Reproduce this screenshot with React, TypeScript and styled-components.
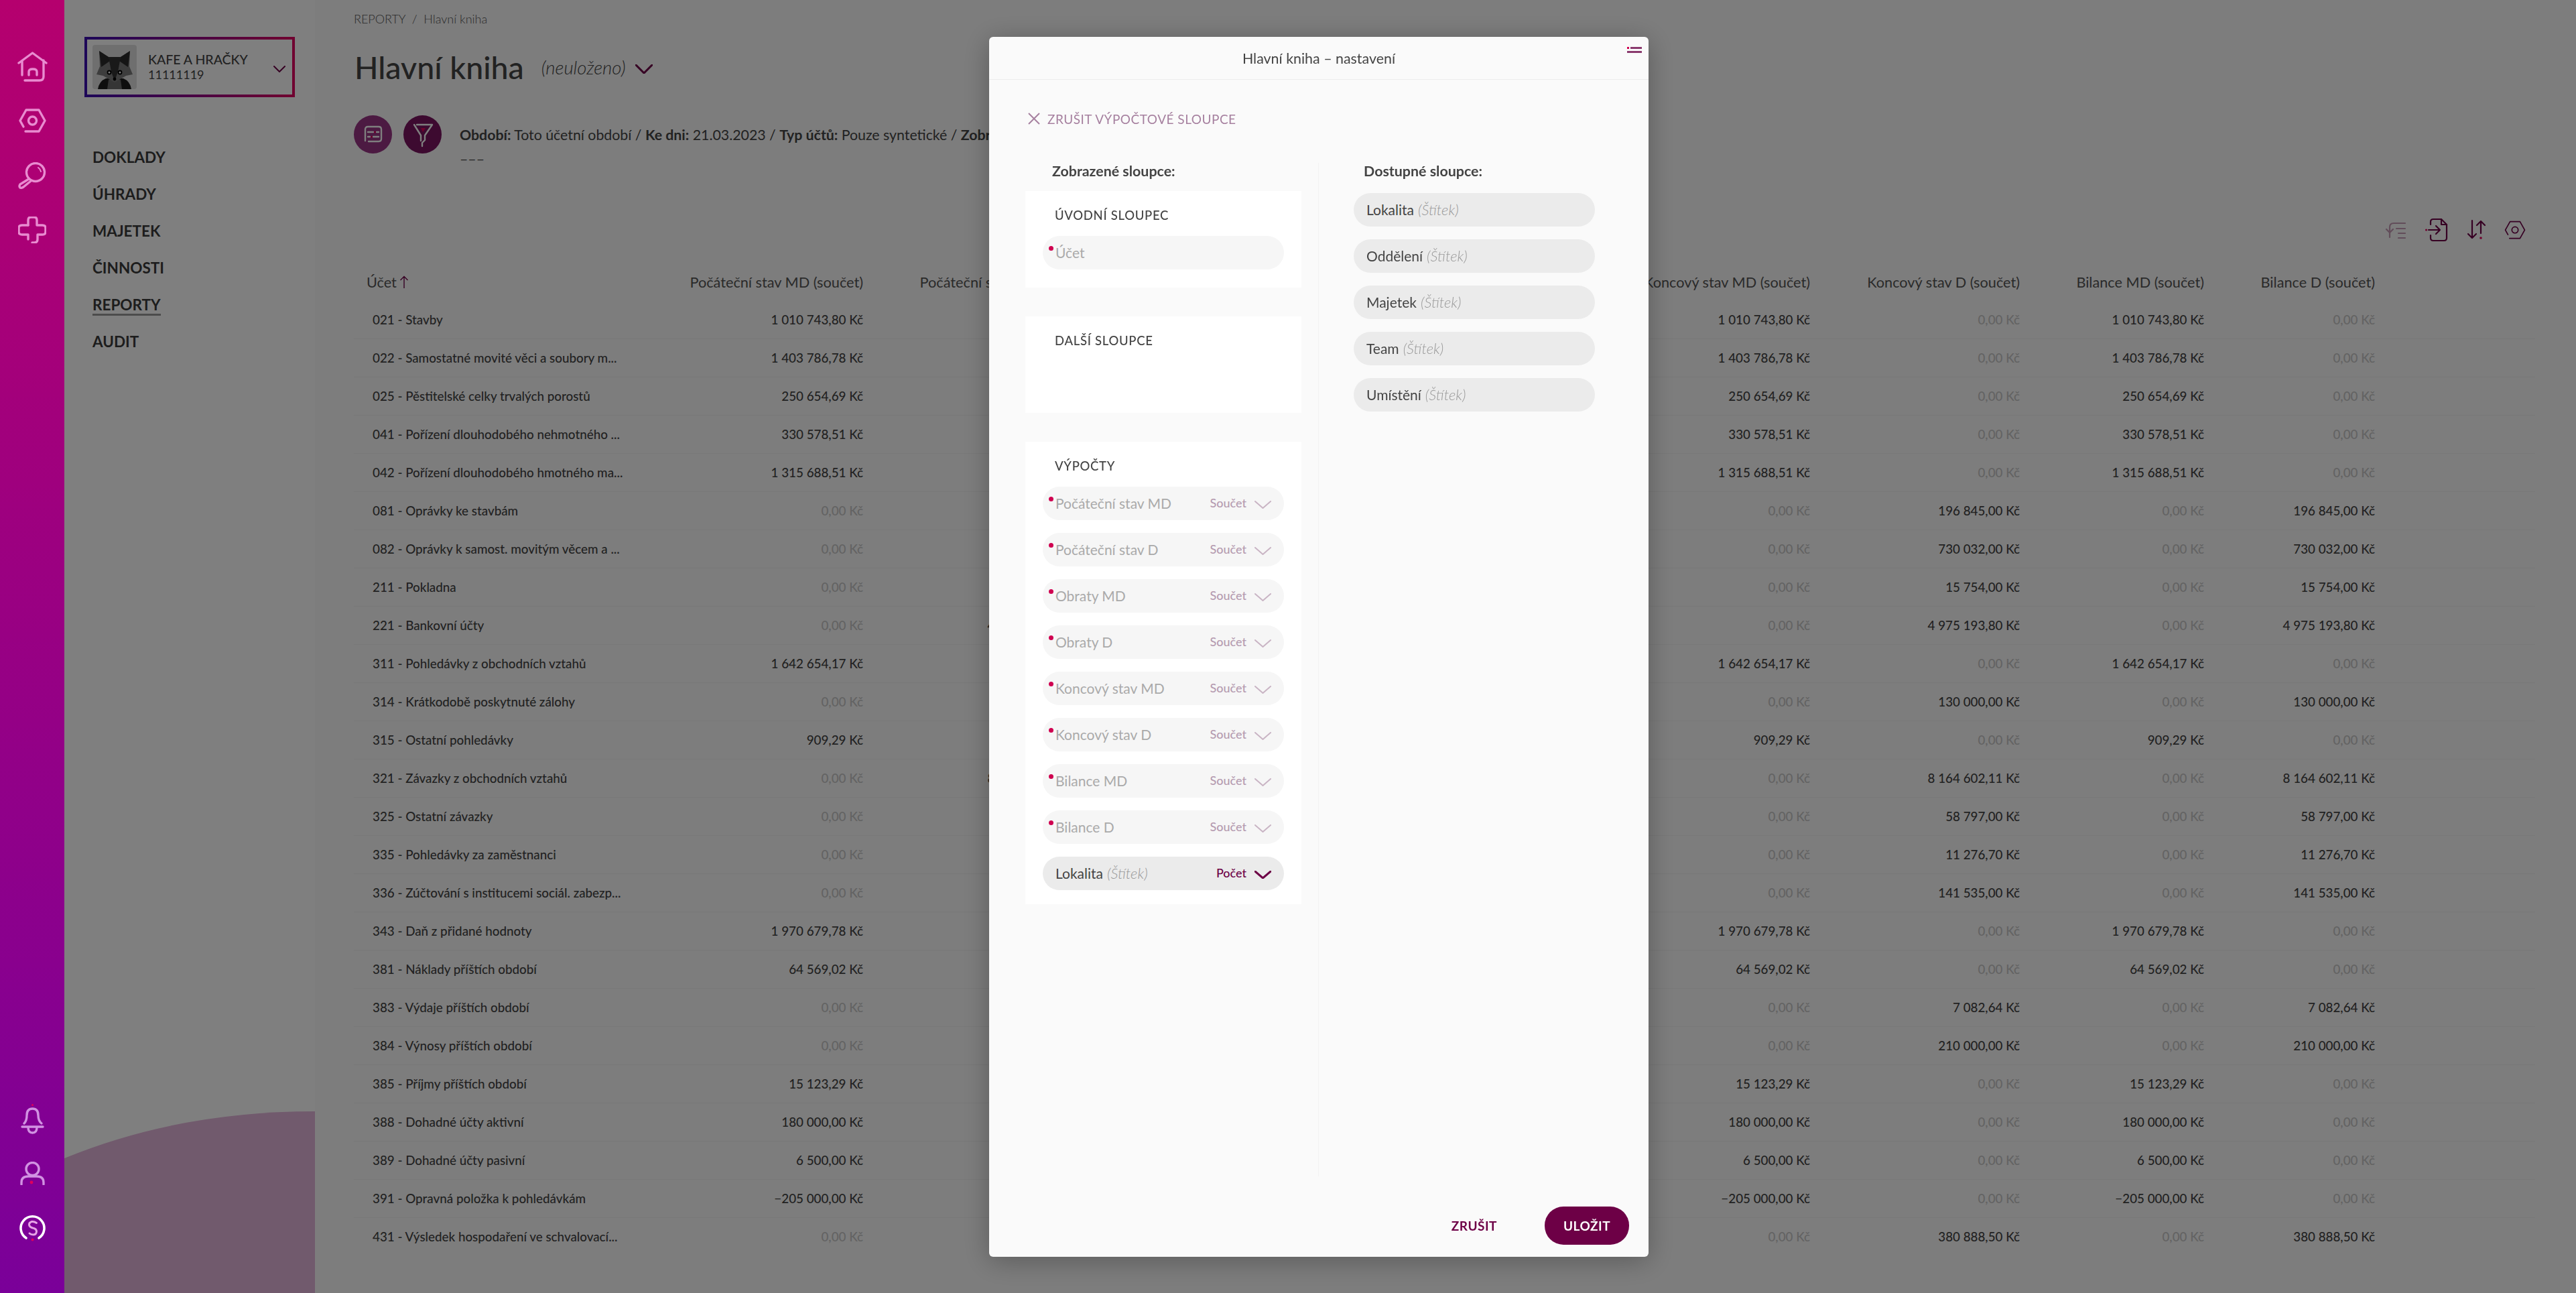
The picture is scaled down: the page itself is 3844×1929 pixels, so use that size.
import React from 'react';
import styled, { createGlobalStyle } from 'styled-components';

const GlobalStyle = createGlobalStyle`
  html, body {
    margin: 0;
    padding: 0;
    background: #fafafa;
    font-family: Lato, "Noto Sans", sans-serif;
    color: #444;
  }
  * {
    box-sizing: border-box;
  }
`;

const TABLE_COLUMNS = '420px 340px 323px 372px 360px 358px 313px 275px 255px 1fr';

const Page = styled.div`
  display: flex;
  width: 3844px;
  height: 1929px;
  overflow: hidden;
`;

const Rail = styled.aside`
  position: relative;
  z-index: 3;
  flex: 0 0 96px;
  display: flex;
  flex-direction: column;
  justify-content: space-between;
  padding: 59px 0 57px;
  background: linear-gradient(180deg, #b5006e 0%, #7a0099 100%);
`;

const RailGroup = styled.div`
  display: flex;
  flex-direction: column;
`;

const RailSlot = styled.div<{ $tone?: string }>`
  height: 81px;
  display: flex;
  align-items: center;
  justify-content: center;
  color: ${p => p.$tone || '#e88cd0'};
  & svg {
    fill: none;
    stroke: currentColor;
    stroke-width: 3.4;
    stroke-linecap: round;
    stroke-linejoin: round;
  }
`;

const Sidebar = styled.nav`
  position: relative;
  flex: 0 0 374px;
  padding: 55px 30px 0;
  background: #fff;
`;

const Blob = styled.svg`
  position: absolute;
  left: 0;
  bottom: 0;
`;

const CompanyBox = styled.div`
  display: flex;
  align-items: center;
  height: 90px;
  width: 314px;
  padding: 0 10px 0 8px;
  border: 4px solid;
  border-image: linear-gradient(90deg, #3c0fb0, #e00060) 1;
`;

const Avatar = styled.svg`
  flex: 0 0 66px;
  border-radius: 4px;
  background: #dedede;
`;

const CompanyText = styled.div`
  flex: 1;
  margin-left: 17px;
  line-height: 23px;
`;

const CompanyName = styled.div`
  font-size: 19.5px;
  font-weight: 500;
`;

const CompanyNumber = styled.div`
  font-size: 18px;
`;

const NavList = styled.ul`
  margin: 64px 0 0;
  padding: 0 0 0 12px;
  list-style: none;
`;

const NavItem = styled.li<{ $active?: boolean }>`
  height: 55px;
  display: flex;
  align-items: center;
  font-size: 22.5px;
  font-weight: 700;
  color: #3a3a3a;
  & span {
    display: inline-block;
    line-height: 26px;
    border-bottom: 3px solid ${p => (p.$active ? '#999' : 'transparent')};
  }
`;

const Main = styled.main`
  flex: 1;
  min-width: 0;
  padding: 17px 61px 0 58px;
`;

const Breadcrumb = styled.div`
  height: 22px;
  line-height: 22px;
  font-size: 18px;
  font-weight: 300;
  color: #555;
`;

const TitleRow = styled.div`
  display: flex;
  align-items: center;
  height: 60px;
  margin-top: 31px;
`;

const Title = styled.h1`
  margin: 0 0 0 1px;
  font-size: 46.5px;
  font-weight: 500;
  color: #444;
`;

const TitleNote = styled.span`
  margin-left: 26px;
  font-size: 27.5px;
  font-weight: 300;
  font-style: italic;
  color: #444;
`;

const TitleChevron = styled.span`
  display: flex;
  margin-left: 3px;
`;

const FilterRow = styled.div`
  display: flex;
  margin-top: 42px;
  height: 83px;
`;

const RoundButton = styled.div<{ $bg: string }>`
  flex: 0 0 57px;
  width: 57px;
  height: 57px;
  margin-right: 17px;
  border-radius: 50%;
  background: ${p => p.$bg};
  display: flex;
  align-items: center;
  justify-content: center;
`;

const FilterText = styled.div`
  margin: 11px 0 0 10px;
  font-size: 21.3px;
  line-height: 36px;
  white-space: nowrap;
  & b {
    font-weight: 700;
  }
`;

const Toolbar = styled.div`
  display: flex;
  justify-content: flex-end;
  align-items: center;
  gap: 28px;
  height: 32px;
  margin-top: 72px;
  padding-right: 14px;
  color: #6d0046;
  & svg {
    fill: none;
    stroke: currentColor;
    stroke-width: 2.2;
    stroke-linecap: round;
    stroke-linejoin: round;
  }
`;

const TableHead = styled.div`
  display: grid;
  grid-template-columns: ${TABLE_COLUMNS};
  align-items: center;
  height: 56px;
  margin-top: 34px;
  padding-bottom: 1px;
  font-size: 21.7px;
  color: #555;
  white-space: nowrap;
`;

const HeadAccount = styled.div`
  padding-left: 19px;
  display: flex;
  align-items: center;
  gap: 4px;
`;

const HeadCell = styled.div`
  display: flex;
  justify-content: flex-end;
  white-space: nowrap;
`;

const Row = styled.div<{ $last?: boolean }>`
  display: grid;
  grid-template-columns: ${TABLE_COLUMNS};
  align-items: center;
  height: 57px;
  padding-bottom: 2px;
  font-size: 18.8px;
  font-weight: 500;
  white-space: nowrap;
  border-bottom: 1px solid ${p => (p.$last ? 'transparent' : '#f0f0f0')};
`;

const AccountCell = styled.div`
  padding-left: 28px;
  color: #444;
`;

const AmountCell = styled.div<{ $zero: boolean }>`
  text-align: right;
  color: ${p => (p.$zero ? '#c6c6c6' : '#444')};
`;

const Overlay = styled.div`
  position: fixed;
  z-index: 2;
  top: 0;
  left: 96px;
  right: 0;
  bottom: 0;
  background: rgba(0, 0, 0, 0.5);
`;

const Modal = styled.section`
  position: fixed;
  z-index: 4;
  top: 55px;
  left: 1476px;
  width: 984px;
  height: 1820px;
  border-radius: 6px;
  background: #fafafa;
  box-shadow: 0 6px 40px rgba(0, 0, 0, 0.28);
`;

const ModalHeader = styled.header`
  height: 64px;
  display: flex;
  align-items: center;
  justify-content: center;
  font-size: 21.4px;
  font-weight: 400;
  color: #444;
  border-bottom: 1px solid #ececec;
`;

const ModalMenu = styled.svg`
  position: absolute;
  top: 15px;
  right: 10px;
`;

const ResetLink = styled.div`
  display: flex;
  align-items: center;
  gap: 10px;
  height: 24px;
  margin: 46px 0 0 57px;
  font-size: 19px;
  letter-spacing: 0.5px;
  color: #a6809f;
`;

const Columns = styled.div`
  display: flex;
  height: 1512px;
  margin-top: 54px;
`;

const LeftColumn = styled.div`
  flex: 0 0 492px;
  padding-left: 54px;
  border-right: 1px solid #f2f2f2;
`;

const RightColumn = styled.div`
  flex: 1;
  padding-left: 52px;
`;

const ColumnTitle = styled.h3<{ $indent: number }>`
  margin: 0;
  padding-left: ${p => p.$indent}px;
  font-size: 21.4px;
  line-height: 24px;
  font-weight: 700;
  color: #444;
`;

const Card = styled.div<{ $tight?: boolean }>`
  width: 412px;
  margin-top: 18px;
  padding: 24px 26px ${p => (p.$tight ? 21 : 27)}px;
  background: #fff;
  & + & {
    margin-top: 43px;
  }
`;

const CardTitle = styled.div`
  padding-left: 18px;
  margin-bottom: 19px;
  font-size: 18.5px;
  line-height: 24px;
  font-weight: 500;
  letter-spacing: 0.7px;
  color: #444;
`;

const EmptyZone = styled.div`
  height: 50px;
`;

const PillList = styled.div<{ $top?: number }>`
  display: flex;
  flex-direction: column;
  gap: 19px;
  margin-top: ${p => p.$top || 0}px;
`;

const Pill = styled.div<{ $disabled?: boolean }>`
  position: relative;
  display: flex;
  align-items: center;
  width: 360px;
  height: 50px;
  padding: 0 19px 2px;
  border-radius: 25px;
  font-size: 21px;
  color: ${p => (p.$disabled ? '#aaa' : '#444')};
  background: ${p => (p.$disabled ? '#f6f6f6' : '#ebebeb')};
`;

const PillDot = styled.i`
  position: absolute;
  left: 9px;
  top: 15px;
  width: 7px;
  height: 7px;
  border-radius: 50%;
  background: #cf0050;
`;

const LabelTag = styled.em`
  margin-left: 6px;
  font-size: 22px;
  font-weight: 300;
  color: #999;
`;

const Aggregate = styled.span<{ $disabled?: boolean }>`
  margin-left: auto;
  font-size: 18px;
  font-weight: 500;
  color: ${p => (p.$disabled ? '#b59bb0' : '#6d0046')};
`;

const PillChevron = styled.svg`
  margin: 5px 0 0 12px;
  fill: none;
  stroke-linecap: round;
`;

const ModalFooter = styled.footer`
  display: flex;
  align-items: center;
  justify-content: flex-end;
  height: 57px;
  margin-top: 45px;
  padding-right: 29px;
`;

const GhostButton = styled.button`
  margin-right: 71px;
  padding: 0;
  border: 0;
  background: none;
  font: 700 19px Lato, sans-serif;
  letter-spacing: 0.5px;
  color: #6d0046;
`;

const SaveButton = styled.button`
  width: 126px;
  height: 57px;
  border: 0;
  border-radius: 28px;
  background: #6d0046;
  font: 700 19px Lato, sans-serif;
  letter-spacing: 0.5px;
  color: #fff;
`;

type Account = { label: string; md?: string; d?: string };

const ZERO = '0,00 Kč';

const accounts: Account[] = [
  { label: '021 - Stavby', md: '1 010 743,80 Kč' },
  { label: '022 - Samostatné movité věci a soubory m...', md: '1 403 786,78 Kč' },
  { label: '025 - Pěstitelské celky trvalých porostů', md: '250 654,69 Kč' },
  { label: '041 - Pořízení dlouhodobého nehmotného ...', md: '330 578,51 Kč' },
  { label: '042 - Pořízení dlouhodobého hmotného ma...', md: '1 315 688,51 Kč' },
  { label: '081 - Oprávky ke stavbám', d: '196 845,00 Kč' },
  { label: '082 - Oprávky k samost. movitým věcem a ...', d: '730 032,00 Kč' },
  { label: '211 - Pokladna', d: '15 754,00 Kč' },
  { label: '221 - Bankovní účty', d: '4 975 193,80 Kč' },
  { label: '311 - Pohledávky z obchodních vztahů', md: '1 642 654,17 Kč' },
  { label: '314 - Krátkodobě poskytnuté zálohy', d: '130 000,00 Kč' },
  { label: '315 - Ostatní pohledávky', md: '909,29 Kč' },
  { label: '321 - Závazky z obchodních vztahů', d: '8 164 602,11 Kč' },
  { label: '325 - Ostatní závazky', d: '58 797,00 Kč' },
  { label: '335 - Pohledávky za zaměstnanci', d: '11 276,70 Kč' },
  { label: '336 - Zúčtování s institucemi sociál. zabezp...', d: '141 535,00 Kč' },
  { label: '343 - Daň z přidané hodnoty', md: '1 970 679,78 Kč' },
  { label: '381 - Náklady příštích období', md: '64 569,02 Kč' },
  { label: '383 - Výdaje příštích období', d: '7 082,64 Kč' },
  { label: '384 - Výnosy příštích období', d: '210 000,00 Kč' },
  { label: '385 - Příjmy příštích období', md: '15 123,29 Kč' },
  { label: '388 - Dohadné účty aktivní', md: '180 000,00 Kč' },
  { label: '389 - Dohadné účty pasivní', md: '6 500,00 Kč' },
  { label: '391 - Opravná položka k pohledávkám', md: '−205 000,00 Kč' },
  { label: '431 - Výsledek hospodaření ve schvalovací...', d: '380 888,50 Kč' },
];

const headers = [
  'Počáteční stav MD (součet)',
  'Počáteční stav D (součet)',
  'Obraty MD (součet)',
  'Obraty D (součet)',
  'Koncový stav MD (součet)',
  'Koncový stav D (součet)',
  'Bilance MD (součet)',
  'Bilance D (součet)',
];

const calculations = [
  'Počáteční stav MD',
  'Počáteční stav D',
  'Obraty MD',
  'Obraty D',
  'Koncový stav MD',
  'Koncový stav D',
  'Bilance MD',
  'Bilance D',
];

const available = ['Lokalita', 'Oddělení', 'Majetek', 'Team', 'Umístění'];

const DOT = '#e0005a';

const Amount: React.FC<{ value?: string }> = ({ value }) => (
  <AmountCell $zero={!value}>{value || ZERO}</AmountCell>
);

const Chevron: React.FC<{ color?: string; width?: number; height?: number; weight?: number }> = ({
  color = '#c9b4c4',
  width = 25,
  height = 12,
  weight = 2,
}) => (
  <PillChevron width={width} height={height} viewBox={`0 0 ${width} ${height}`} stroke={color} strokeWidth={weight}>
    <polyline points={`1,1 ${width / 2},${height - 1} ${width - 1},1`} />
  </PillChevron>
);

const HomeIcon = () => (
  <svg width="45" height="46" viewBox="0 0 45 46">
    <path d="M2 17 L22.5 2 L43 17" />
    <path d="M7 14 V35" />
    <path d="M39 13 V37 Q39 43 33 43 H11" />
    <path d="M17 35 V30 Q17 26 23 26 Q29 26 29 30 V35" />
  </svg>
);

const HexIcon: React.FC<{ size?: number }> = ({ size = 41 }) => (
  <svg width={size} height={size * 0.88} viewBox="0 0 41 36">
    <path d="M10 34 H30 L39 18 L30 2 H11 L2 18 L7 27" />
    <circle cx="20.5" cy="18" r="6" />
  </svg>
);

const SearchIcon = () => (
  <svg width="42" height="40" viewBox="0 0 42 40">
    <circle cx="26" cy="15" r="13.5" />
    <path d="M16 25 L3 33 Q1 36 3 38 Q5 39 8 37 L19 28" />
    <path d="M30 8 Q33 10 34 14" strokeWidth="2" />
  </svg>
);

const PlusIcon = () => (
  <svg width="42" height="40" viewBox="0 0 42 40">
    <path d="M15 13 V5 Q15 1 19 1 H24 Q28 1 28 5 V13 H36 Q41 13 41 17 V23 Q41 27 36 27 H29 V34 Q29 39 24 39 H21" />
    <path d="M15 34 V27 H6 Q1 27 1 23 V17 Q1 13 6 13 H15" />
  </svg>
);

const BellIcon = () => (
  <svg width="35" height="45" viewBox="0 0 35 45">
    <circle cx="17.5" cy="1.6" r="1.5" fill={DOT} stroke="none" />
    <path d="M5 29 Q9 25 9 17 Q9 7 17.5 7 Q26 7 26 17 Q26 25 31 29" />
    <path d="M2 34 H33" />
    <path d="M11 35 Q11 43 17.5 43 Q24 43 24 35" />
  </svg>
);

const UserIcon = () => (
  <svg width="37" height="35" viewBox="0 0 37 35">
    <circle cx="18.5" cy="11" r="9.5" />
    <path d="M2 34 V31 Q2 22 12 22 H25 Q35 22 35 31 V34" />
    <circle cx="17" cy="31" r="2.4" fill={DOT} stroke="none" />
  </svg>
);

const LogoIcon = () => (
  <svg width="39" height="40" viewBox="0 0 39 40">
    <path d="M10 35 A17.5 17.5 0 1 1 29 35" stroke="#fff" strokeWidth="3.6" />
    <path d="M25.5 12.5 Q22 10 18.5 10.5 Q14 12 14.5 15.5 Q15.5 19 20 20 Q25.5 21 25.5 25.5 Q25 30 20.5 30 Q17 30 15 28" stroke="#e6a5e6" strokeWidth="3" />
    <circle cx="19.5" cy="37.5" r="2" fill={DOT} stroke="none" />
  </svg>
);

const FoxAvatar = () => (
  <Avatar width="66" height="66" viewBox="0 0 66 66">
    <path d="M8 66 Q10 54 20 50 H46 Q56 54 58 66 Z" fill="#1c1c1c" />
    <path d="M24 52 H42 L44 66 H22 Z" fill="#6a6a6a" />
    <path d="M10 9 L24 18 H42 L56 9 L55 32 L60 44 L50 46 L33 56 L16 46 L6 44 L11 32 Z" fill="#7a7a7a" />
    <path d="M10 9 L24 18 L26 24 L13 33 Z" fill="#2a2a2a" />
    <path d="M56 9 L42 18 L40 24 L53 33 Z" fill="#2a2a2a" />
    <path d="M24 18 H42 L38 40 L33 54 L28 40 Z" fill="#333" />
    <circle cx="25" cy="41" r="3.4" fill="#000" />
    <circle cx="41" cy="41" r="3.4" fill="#000" />
    <circle cx="25" cy="41" r="1.5" fill="#fff" />
    <circle cx="41" cy="41" r="1.5" fill="#fff" />
    <circle cx="33" cy="51" r="2.4" fill="#000" />
  </Avatar>
);

const SheetIcon = () => (
  <svg width="30" height="30" viewBox="0 0 30 30" fill="none" stroke="#fff" strokeWidth="2.4" strokeLinecap="round">
    <path d="M3 24 V7 Q3 3 7 3 H23 Q27 3 27 7 V21 Q27 25 23 25 H8" />
    <path d="M7 11 H15 M20 11 H23" />
    <path d="M7 18 H10 M15 18 H23" />
    <circle cx="17.5" cy="11" r="1.5" fill={DOT} stroke="none" />
    <circle cx="12.5" cy="18" r="1.5" fill={DOT} stroke="none" />
  </svg>
);

const FunnelIcon = () => (
  <svg width="32" height="38" viewBox="0 0 32 38" fill="none" stroke="#fff" strokeWidth="2.4" strokeLinecap="round" strokeLinejoin="round">
    <path d="M7 4 H30 L19 20 V27 L15 31 V36" />
    <path d="M3 4 L13 20 V28" />
    <path d="M13 9 H20 L16 15 Z" fill={DOT} stroke="none" />
  </svg>
);

const SortListIcon = () => (
  <svg width="32" height="32" viewBox="0 0 32 32" color="#c49bb4" stroke="currentColor">
    <path d="M7 27 V12 Q7 6 13 6 H30" />
    <path d="M2 15 L7 20 L12 15" />
    <path d="M17 14 H30 M20 21 H30 M20 28 H30" />
  </svg>
);

const ImportIcon = () => (
  <svg width="34" height="36" viewBox="0 0 34 36">
    <path d="M8 10 V6 Q8 2 12 2 H24 L32 10 V30 Q32 34 28 34 H12 Q8 34 8 30 V26" />
    <path d="M24 2 V10 H32" />
    <path d="M5 18 H22 M16 12 L22 18 L16 24" />
    <circle cx="1.5" cy="18" r="1.5" fill={DOT} stroke="none" />
  </svg>
);

const SwapIcon = () => (
  <svg width="28" height="32" viewBox="0 0 28 32">
    <path d="M8 2 V28 M2 22 L8 28 L14 22" />
    <path d="M21 3 V21 M15 9 L21 3 L27 9" />
    <circle cx="21" cy="28" r="1.8" fill={DOT} stroke="none" />
  </svg>
);

const App: React.FC = () => {
  return (
    <Page>
      <GlobalStyle />
      <Rail>
        <RailGroup>
          <RailSlot><HomeIcon /></RailSlot>
          <RailSlot><HexIcon /></RailSlot>
          <RailSlot><SearchIcon /></RailSlot>
          <RailSlot><PlusIcon /></RailSlot>
        </RailGroup>
        <RailGroup>
          <RailSlot $tone="#d192e2"><BellIcon /></RailSlot>
          <RailSlot $tone="#d192e2"><UserIcon /></RailSlot>
          <RailSlot $tone="#d192e2"><LogoIcon /></RailSlot>
        </RailGroup>
      </Rail>

      <Sidebar>
        <CompanyBox>
          <FoxAvatar />
          <CompanyText>
            <CompanyName>KAFE A HRAČKY</CompanyName>
            <CompanyNumber>11111119</CompanyNumber>
          </CompanyText>
          <Chevron color="#6d0046" width={18} height={10} />
        </CompanyBox>
        <NavList>
          <NavItem><span>DOKLADY</span></NavItem>
          <NavItem><span>ÚHRADY</span></NavItem>
          <NavItem><span>MAJETEK</span></NavItem>
          <NavItem><span>ČINNOSTI</span></NavItem>
          <NavItem $active><span>REPORTY</span></NavItem>
          <NavItem><span>AUDIT</span></NavItem>
        </NavList>
        <Blob width="374" height="271" viewBox="0 0 374 271">
          <path d="M0 70 Q170 0 374 0 V271 H0 Z" fill="#e3b5da" />
        </Blob>
      </Sidebar>

      <Main>
        <Breadcrumb>REPORTY&nbsp; /&nbsp; Hlavní kniha</Breadcrumb>
        <TitleRow>
          <Title>Hlavní kniha</Title>
          <TitleNote>(neuloženo)</TitleNote>
          <TitleChevron>
            <Chevron color="#6d0046" width={26} height={14} weight={3} />
          </TitleChevron>
        </TitleRow>
        <FilterRow>
          <RoundButton $bg="#983484"><SheetIcon /></RoundButton>
          <RoundButton $bg="#7a1560"><FunnelIcon /></RoundButton>
          <FilterText>
            <b>Období:</b> Toto účetní období / <b>Ke dni:</b> 21.03.2023 / <b>Typ účtů:</b> Pouze syntetické / <b>Zobrazit:</b> Vše
            <div>–––</div>
          </FilterText>
        </FilterRow>
        <Toolbar>
          <SortListIcon />
          <ImportIcon />
          <SwapIcon />
          <HexIcon size={32} />
        </Toolbar>
        <TableHead>
          <HeadAccount>
            Účet
            <svg width="14" height="20" viewBox="0 0 14 20" fill="none" stroke="#6d0046" strokeWidth="1.4">
              <path d="M7 19 V2 M1.5 7 L7 1.5 L12.5 7" />
            </svg>
          </HeadAccount>
          {headers.map(h => (
            <HeadCell key={h}>{h}</HeadCell>
          ))}
        </TableHead>
        {accounts.map((a, i) => (
          <Row key={a.label} $last={i === accounts.length - 1}>
            <AccountCell>{a.label}</AccountCell>
            <Amount value={a.md} />
            <Amount value={a.d} />
            <Amount />
            <Amount />
            <Amount value={a.md} />
            <Amount value={a.d} />
            <Amount value={a.md} />
            <Amount value={a.d} />
          </Row>
        ))}
      </Main>

      <Overlay />

      <Modal>
        <ModalHeader>Hlavní kniha – nastavení</ModalHeader>
        <ModalMenu width="22" height="10" viewBox="0 0 22 10">
          <rect x="0" y="0" width="3" height="3" fill="#cf0050" />
          <rect x="5" y="0" width="17" height="3" fill="#8a3a6e" />
          <rect x="0" y="6" width="22" height="3" fill="#8a3a6e" />
        </ModalMenu>
        <ResetLink>
          <svg width="20" height="20" viewBox="0 0 20 20" fill="none" stroke="#a6809f" strokeWidth="2">
            <path d="M2 2 L18 18 M18 2 L2 18" />
          </svg>
          ZRUŠIT VÝPOČTOVÉ SLOUPCE
        </ResetLink>
        <Columns>
          <LeftColumn>
            <ColumnTitle $indent={40}>Zobrazené sloupce:</ColumnTitle>
            <Card>
              <CardTitle>ÚVODNÍ SLOUPEC</CardTitle>
              <Pill $disabled>
                <PillDot />
                Účet
              </Pill>
            </Card>
            <Card>
              <CardTitle>DALŠÍ SLOUPCE</CardTitle>
              <EmptyZone />
            </Card>
            <Card $tight>
              <CardTitle>VÝPOČTY</CardTitle>
              <PillList>
                {calculations.map(c => (
                  <Pill key={c} $disabled>
                    <PillDot />
                    {c}
                    <Aggregate $disabled>Součet</Aggregate>
                    <Chevron />
                  </Pill>
                ))}
                <Pill>
                  Lokalita <LabelTag>(Štítek)</LabelTag>
                  <Aggregate>Počet</Aggregate>
                  <Chevron color="#6d0046" weight={3} />
                </Pill>
              </PillList>
            </Card>
          </LeftColumn>
          <RightColumn>
            <ColumnTitle $indent={15}>Dostupné sloupce:</ColumnTitle>
            <PillList $top={21}>
              {available.map(a => (
                <Pill key={a}>
                  {a} <LabelTag>(Štítek)</LabelTag>
                </Pill>
              ))}
            </PillList>
          </RightColumn>
        </Columns>
        <ModalFooter>
          <GhostButton>ZRUŠIT</GhostButton>
          <SaveButton>ULOŽIT</SaveButton>
        </ModalFooter>
      </Modal>
    </Page>
  );
};

export default App;
